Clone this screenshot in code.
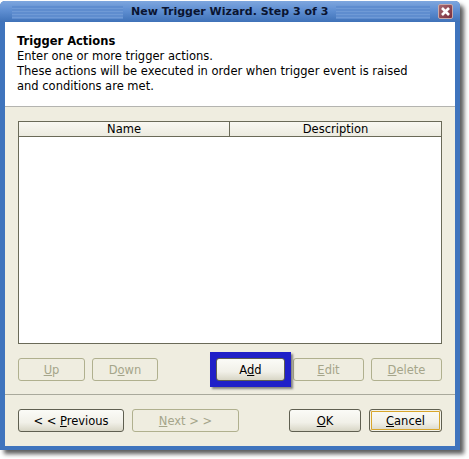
<style>
:global(body) { margin: 0; background: #fff; }
:global(*) { box-sizing: border-box; }
.page { width: 469px; height: 459px; padding: 1px 0 0 0; font-family: "DejaVu Sans", sans-serif; font-size: 11.5px; color: #000; overflow: hidden; }
.win { width: 460px; height: 449px; display: flex; flex-direction: column; background: #3f74bd; border-radius: 5px 5px 0 0; box-shadow: 4px 4px 4px rgba(40,40,40,.75); }
.title { height: 21px; flex: none; display: flex; align-items: center; padding: 0 7px 0 12px; gap: 8px; border-radius: 5px 5px 0 0;
  background: linear-gradient(#7ea6de, #5f8fd2 45%, #3f72b8); }
.stripes { flex: 1; height: 14px; background: repeating-linear-gradient(#6f9ad6 0 1px, #5f8dcf 1px 3px); }
.stripes.first { flex: none; width: 111px; }
.title b { font-size: 11px; color: #0a1430; }
.close { width: 15px; height: 15px; flex: none; border: 1px solid #c9a9a9; border-radius: 2px; background: linear-gradient(135deg, #a66a72, #7a2c3a); display: flex; }
.body { flex: 1; margin: 0 5px 4px 5px; background: #efede0; display: flex; flex-direction: column; min-height: 0; }
.head { height: 85px; flex: none; background: #fff; border-bottom: 1px solid #b4b4b0; padding: 12px 12px 0; line-height: 15px; }
.head b { display: block; }
.panel { flex: 1; padding: 14px 13px 0; display: flex; flex-direction: column; min-height: 0; }
.table { height: 223px; flex: none; background: #fff; border: 1px solid #6a6a58; }
.thead { height: 15px; display: flex; background: linear-gradient(#f9f8f2, #ecebe0); border-bottom: 1px solid #6a6a58; text-align: center; line-height: 14px; }
.thead span:first-child { width: 211px; border-right: 1px solid #6a6a58; }
.thead span:last-child { flex: 1; }
.row { display: flex; margin-top: 14px; height: 23px; }
.left { display: flex; gap: 7px; }
.gap1 { width: 58px; flex: none; }
.gap2 { width: 8px; flex: none; }
button { font: inherit; height: 23px; padding: 0; border-radius: 3px; border: 1px solid #5f5f50; background: linear-gradient(#fbfbf7, #f1f0e8 60%, #d8d6c6); color: #000; }
button:disabled { background: #efede0; border-color: #b0b08e; color: #a5a58a; }
.focus { box-shadow: inset 0 0 0 1px #f4f3ea, inset 0 0 0 2px #d8a62c; }
.hlwrap { position: relative; display: flex; }
.hlwrap::before { content: ""; position: absolute; inset: -6px; background: #2020c8; box-shadow: 2px 2px 2px rgba(60,60,60,.6); }
.hlwrap button { position: relative; }
.rule { border: 0; border-top: 1px solid #a9a99c; margin: 13px -13px 0; }
.foot { margin-top: 14px; }
</style>

<div class="page">
  <div class="win">
    <div class="title">
      <div class="stripes first"></div>
      <b>New Trigger Wizard. Step 3 of 3</b>
      <div class="stripes"></div>
      <div class="close">
        <svg width="13" height="13" viewBox="0 0 13 13"><path d="M3 3l7 7M10 3l-7 7" stroke="#fff" stroke-width="2.6" fill="none"/></svg>
      </div>
    </div>
    <div class="body">
      <div class="head">
        <b>Trigger Actions</b>
        Enter one or more trigger actions.<br>
        These actions will be executed in order when trigger event is raised<br>
        and conditions are met.
      </div>
      <div class="panel">
        <div class="table">
          <div class="thead"><span>Name</span><span>Description</span></div>
        </div>
        <div class="row">
          <div class="left">
            <button disabled style="width:67px"><u>U</u>p</button>
            <button disabled style="width:66px">D<u>o</u>wn</button>
          </div>
          <div class="gap1"></div>
          <div class="hlwrap"><button style="width:69px">A<u>d</u>d</button></div>
          <div class="gap2"></div>
          <div class="left">
            <button disabled style="width:71px"><u>E</u>dit</button>
            <button disabled style="width:71px"><u>D</u>elete</button>
          </div>
        </div>
        <hr class="rule">
        <div class="row foot">
          <button style="width:106px">&lt; &lt; <u>P</u>revious</button>
          <div class="gap2"></div>
          <button disabled style="width:107px"><u>N</u>ext &gt; &gt;</button>
          <div style="width:50px"></div>
          <button style="width:72px"><u>O</u>K</button>
          <div class="gap2"></div>
          <button class="focus" style="width:73px"><u>C</u>ancel</button>
        </div>
      </div>
    </div>
  </div>
</div>
